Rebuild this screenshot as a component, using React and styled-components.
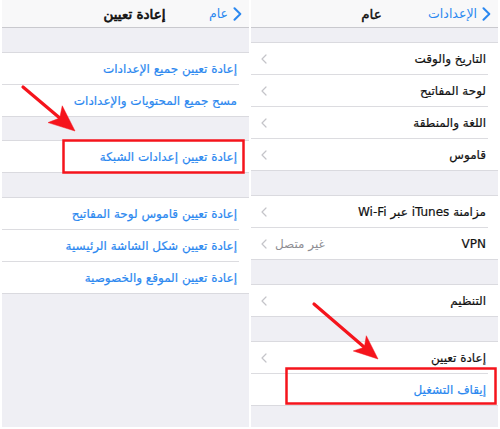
import styled, { createGlobalStyle } from 'styled-components';

const GlobalStyle = createGlobalStyle`
  html, body {
    margin: 0;
    padding: 0;
    background: #ffffff;
  }
  body {
    font-family: "DejaVu Sans", "Noto Sans", sans-serif;
  }
`;

const BLUE = '#2b88f0';

const leftGroups = [
  { gap: 24, rows: ['إعادة تعيين جميع الإعدادات', 'مسح جميع المحتويات والإعدادات'] },
  { gap: 23, rows: ['إعادة تعيين إعدادات الشبكة'] },
  { gap: 24, rows: ['إعادة تعيين قاموس لوحة المفاتيح', 'إعادة تعيين شكل الشاشة الرئيسية', 'إعادة تعيين الموقع والخصوصية'] },
];

const rightGroups = [
  { gap: 14, rows: [{ label: 'التاريخ والوقت' }, { label: 'لوحة المفاتيح' }, { label: 'اللغة والمنطقة' }, { label: 'قاموس' }] },
  { gap: 24, rows: [{ label: 'مزامنة iTunes عبر Wi-Fi' }, { label: 'VPN', detail: 'غير متصل' }] },
  { gap: 24, rows: [{ label: 'التنظيم' }] },
  { gap: 24, rows: [{ label: 'إعادة تعيين' }, { label: 'إيقاف التشغيل', action: true, noChevron: true }] },
];

function BackChevron() {
  return (
    <svg width="9" height="14" viewBox="0 0 9 14">
      <path d="M1.5 1.2 L7.3 7 L1.5 12.8" fill="none" stroke={BLUE} strokeWidth="2" strokeLinecap="round" strokeLinejoin="round" />
    </svg>
  );
}

function RowChevron() {
  return (
    <svg width="6" height="10" viewBox="0 0 6 10">
      <path d="M5 1 L1 5 L5 9" fill="none" stroke="#c4c4c9" strokeWidth="1.2" strokeLinecap="round" strokeLinejoin="round" />
    </svg>
  );
}

function Arrow({ x1, y1, x2, y2, head = 24, half = 10 }) {
  const dx = x2 - x1;
  const dy = y2 - y1;
  const len = Math.hypot(dx, dy);
  const ux = dx / len;
  const uy = dy / len;
  const px = -uy;
  const py = ux;
  const bx = x2 - ux * head;
  const by = y2 - uy * head;
  const nx = x2 - ux * (head - 6);
  const ny = y2 - uy * (head - 6);
  const pts = [
    [x2, y2],
    [bx + px * half, by + py * half],
    [nx, ny],
    [bx - px * half, by - py * half],
  ];
  return (
    <g fill="#f5141c" stroke="#f5141c">
      <line x1={x1} y1={y1} x2={nx} y2={ny} strokeWidth="3.2" strokeLinecap="round" />
      <polygon points={pts.map((p) => p.join(',')).join(' ')} strokeWidth="0.5" />
    </g>
  );
}

export default function App() {
  return (
    <>
      <GlobalStyle />
      <Page>
        <Screen dir="rtl">
          <NavBar>
            <Back>
              <BackChevron />
              <span>عام</span>
            </Back>
            <Title $weight={0.7} $nudge={9}>إعادة تعيين</Title>
          </NavBar>
          {leftGroups.map((g, i) => (
            <Group key={i} $gap={g.gap}>
              {g.rows.map((label) => (
                <Row key={label}>
                  <RowInner>
                    <Label $action>{label}</Label>
                  </RowInner>
                </Row>
              ))}
            </Group>
          ))}
        </Screen>
        <Screen dir="rtl">
          <NavBar>
            <Back>
              <BackChevron />
              <span>الإعدادات</span>
            </Back>
            <Title $weight={0.4} $nudge={-3}>عام</Title>
          </NavBar>
          {rightGroups.map((g, i) => (
            <Group key={i} $gap={g.gap}>
              {g.rows.map((r) => (
                <Row key={r.label}>
                  <RowInner>
                    <Label $action={r.action}>{r.label}</Label>
                    {!r.noChevron && (
                      <Accessory>
                        {r.detail && <Detail>{r.detail}</Detail>}
                        <RowChevron />
                      </Accessory>
                    )}
                  </RowInner>
                </Row>
              ))}
            </Group>
          ))}
        </Screen>
        <Overlay width="500" height="429" viewBox="0 0 500 429">
          <rect x="63.5" y="140.5" width="180" height="32" fill="none" stroke="#f5141c" strokeWidth="2.5" />
          <rect x="286.5" y="368.5" width="209" height="35" fill="none" stroke="#f5141c" strokeWidth="2.5" />
          <Arrow x1={23} y1={87} x2={75} y2={131} head={26} half={11} />
          <Arrow x1={314} y1={304} x2={378} y2={359} />
        </Overlay>
      </Page>
    </>
  );
}

const Page = styled.div`
  position: relative;
  width: 500px;
  height: 429px;
  box-sizing: border-box;
  padding: 0 2px 2px 2px;
  display: flex;
  gap: 2px;
  overflow: hidden;
  background: #ffffff;
`;

const Screen = styled.div`
  flex: 1;
  min-width: 0;
  background: #efeff4;
  display: flex;
  flex-direction: column;
  overflow: hidden;
`;

const NavBar = styled.div`
  height: 28px;
  flex-shrink: 0;
  background: #f8f8f9;
  border-bottom: 1px solid #c9c9ce;
  display: grid;
  grid-template-columns: 100%;
  align-items: center;
  padding: 0 7px;
  box-sizing: border-box;

  & > * {
    grid-area: 1 / 1;
  }
`;

const Back = styled.div`
  display: flex;
  align-items: center;
  gap: 5px;
  color: ${BLUE};
  font-size: 12.5px;
  justify-self: start;
  white-space: nowrap;
`;

const Title = styled.div`
  justify-self: center;
  margin-left: ${(p) => Math.max(p.$nudge * 2, 0)}px;
  margin-right: ${(p) => Math.max(-p.$nudge * 2, 0)}px;
  font-size: 13.5px;
  font-weight: 400;
  -webkit-text-stroke: ${(p) => p.$weight}px #111;
  color: #111;
  white-space: nowrap;
`;

const Group = styled.div`
  margin-top: ${(p) => p.$gap}px;
  background: #ffffff;
  border-top: 1px solid #dadadf;
  border-bottom: 1px solid #dadadf;
`;

const Row = styled.div`
  padding-right: 10px;
  &:not(:last-child) > div {
    border-bottom: 1px solid #dcdce0;
  }
`;

const RowInner = styled.div`
  height: 31px;
  display: flex;
  align-items: center;
  justify-content: space-between;
  padding: 0 2px 0 10px;
`;

const Label = styled.span`
  font-size: 12px;
  color: ${(p) => (p.$action ? BLUE : '#111')};
  -webkit-text-stroke: 0.2px currentColor;
  white-space: nowrap;
`;

const Accessory = styled.div`
  display: flex;
  align-items: center;
  gap: 8px;
`;

const Detail = styled.span`
  font-size: 12px;
  color: #8e8e93;
`;

const Overlay = styled.svg`
  position: absolute;
  inset: 0;
  pointer-events: none;
`;
